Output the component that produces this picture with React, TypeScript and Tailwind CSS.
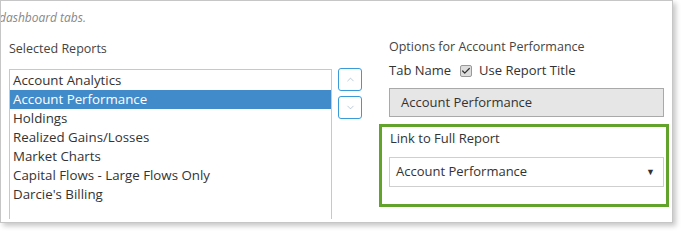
import { Check, ChevronDown, ChevronUp } from "lucide-react";

const reports = [
  "Account Analytics",
  "Account Performance",
  "Holdings",
  "Realized Gains/Losses",
  "Market Charts",
  "Capital Flows - Large Flows Only",
  "Darcie's Billing",
];

const font = { fontFamily: "'Open Sans', 'Noto Sans', sans-serif" };

export default function App() {
  const selected = "Account Performance";
  return (
    <div className="h-[232px] w-[684px] bg-white" style={font}>
      <div className="h-[223px] w-[673px] overflow-hidden border border-[#c6c6c6] bg-white text-[13px] text-[#333] shadow-[3px_3px_5px_rgba(0,0,0,0.22)]">
        <p className="-ml-[2px] mt-[7px] h-[19px] text-[12px] leading-[19px] italic text-[#888]">
          dashboard tabs.
        </p>

        <div className="mt-[10px] flex">
          {/* selected reports list */}
          <div className="ml-[8px] w-[323px]">
            <h3 className="mt-[2px] h-[19px] text-[12.5px] leading-[19px] text-[#444]">Selected Reports</h3>
            <ul className="mt-[11px] h-[150px] border-x border-t border-[#c8c8c8] py-px text-[13.3px]">
              {reports.map((r) => (
                <li
                  key={r}
                  className={
                    r === selected
                      ? "h-[19px] bg-[#428bca] pl-[3px] leading-[19px] text-white"
                      : "h-[19px] pl-[3px] leading-[19px]"
                  }
                >
                  {r}
                </li>
              ))}
            </ul>
          </div>

          {/* reorder buttons */}
          <div className="ml-[6px] mt-[31px] flex flex-col gap-[5px]">
            <button className="flex h-[23px] w-[24px] items-center justify-center rounded-[3px] border border-[#3a9bd9] bg-white text-[#8aa6bd]">
              <ChevronUp size={11} strokeWidth={1.25} />
            </button>
            <button className="flex h-[23px] w-[24px] items-center justify-center rounded-[3px] border border-[#3a9bd9] bg-white text-[#8aa6bd]">
              <ChevronDown size={11} strokeWidth={1.25} />
            </button>
          </div>

          {/* options */}
          <div className="ml-[17px] w-[290px]">
            <h3 className="ml-[10px] h-[19px] text-[12.5px] leading-[19px] text-[#444]">
              Options for Account Performance
            </h3>
            <div className="ml-[10px] mt-[5px] flex h-[19px] items-center leading-[19px]">
              <span>Tab Name</span>
              <span className="ml-[9px] flex h-[12px] w-[12px] items-center justify-center rounded-[2px] border border-[#999] bg-[#ddd] text-[#333]">
                <Check size={10} strokeWidth={3} />
              </span>
              <span className="ml-[7px]">Use Report Title</span>
            </div>
            <div className="ml-[10px] mt-[8px] flex h-[29px] w-[275px] items-center border border-[#a9a9a9] bg-[#e6e6e6] pl-[11px]">
              Account Performance
            </div>

            <div className="mt-[7px] h-[83px] w-[290px] border-[3px] border-[#62a32b] pt-[2px]">
              <p className="ml-[8px] h-[19px] leading-[19px]">Link to Full Report</p>
              <div className="ml-[7px] mt-[9px] flex h-[30px] w-[275px] items-center justify-between border border-[#cfcfcf] pl-[6px] pr-[8px]">
                <span>Account Performance</span>
                <span className="text-[9px] text-[#333]">▼</span>
              </div>
            </div>
          </div>
        </div>
      </div>
    </div>
  );
}
